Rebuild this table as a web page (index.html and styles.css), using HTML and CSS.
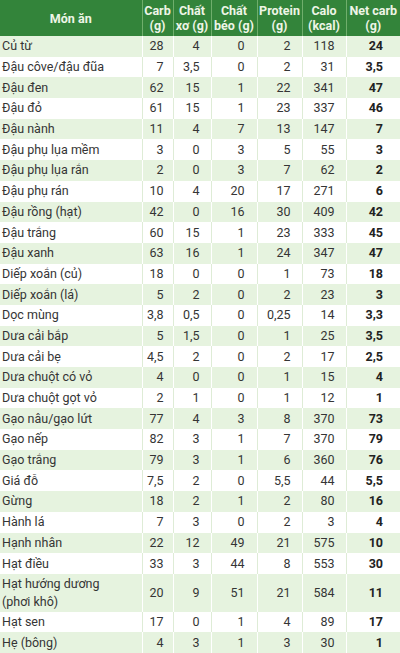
FILE: index.html
```html
<!DOCTYPE html>
<html lang="vi">
<head>
<meta charset="utf-8">
<title>Net carb</title>
<link rel="stylesheet" href="styles.css">
</head>
<body>
<table class="carb-table">
  <colgroup>
    <col class="c-name"><col class="c-carb"><col class="c-fiber"><col class="c-fat"><col class="c-prot"><col class="c-cal"><col class="c-net">
  </colgroup>
  <thead>
    <tr>
      <th>Món ăn</th>
      <th>Carb<br>(g)</th>
      <th>Chất<br>xơ (g)</th>
      <th>Chất<br>béo (g)</th>
      <th>Protein<br>(g)</th>
      <th>Calo<br>(kcal)</th>
      <th>Net carb<br>(g)</th>
    </tr>
  </thead>
  <tbody>
    <tr><td>Củ từ</td><td>28</td><td>4</td><td>0</td><td>2</td><td>118</td><td>24</td></tr>
    <tr><td>Đậu côve/đậu đũa</td><td>7</td><td>3,5</td><td>0</td><td>2</td><td>31</td><td>3,5</td></tr>
    <tr><td>Đậu đen</td><td>62</td><td>15</td><td>1</td><td>22</td><td>341</td><td>47</td></tr>
    <tr><td>Đậu đỏ</td><td>61</td><td>15</td><td>1</td><td>23</td><td>337</td><td>46</td></tr>
    <tr><td>Đậu nành</td><td>11</td><td>4</td><td>7</td><td>13</td><td>147</td><td>7</td></tr>
    <tr><td>Đậu phụ lụa mềm</td><td>3</td><td>0</td><td>3</td><td>5</td><td>55</td><td>3</td></tr>
    <tr><td>Đậu phụ lụa rắn</td><td>2</td><td>0</td><td>3</td><td>7</td><td>62</td><td>2</td></tr>
    <tr><td>Đậu phụ rán</td><td>10</td><td>4</td><td>20</td><td>17</td><td>271</td><td>6</td></tr>
    <tr><td>Đậu rồng (hạt)</td><td>42</td><td>0</td><td>16</td><td>30</td><td>409</td><td>42</td></tr>
    <tr><td>Đậu trắng</td><td>60</td><td>15</td><td>1</td><td>23</td><td>333</td><td>45</td></tr>
    <tr><td>Đậu xanh</td><td>63</td><td>16</td><td>1</td><td>24</td><td>347</td><td>47</td></tr>
    <tr><td>Diếp xoắn (củ)</td><td>18</td><td>0</td><td>0</td><td>1</td><td>73</td><td>18</td></tr>
    <tr><td>Diếp xoắn (lá)</td><td>5</td><td>2</td><td>0</td><td>2</td><td>23</td><td>3</td></tr>
    <tr><td>Dọc mùng</td><td>3,8</td><td>0,5</td><td>0</td><td>0,25</td><td>14</td><td>3,3</td></tr>
    <tr><td>Dưa cải bắp</td><td>5</td><td>1,5</td><td>0</td><td>1</td><td>25</td><td>3,5</td></tr>
    <tr><td>Dưa cải bẹ</td><td>4,5</td><td>2</td><td>0</td><td>2</td><td>17</td><td>2,5</td></tr>
    <tr><td>Dưa chuột có vỏ</td><td>4</td><td>0</td><td>0</td><td>1</td><td>15</td><td>4</td></tr>
    <tr><td>Dưa chuột gọt vỏ</td><td>2</td><td>1</td><td>0</td><td>1</td><td>12</td><td>1</td></tr>
    <tr><td>Gạo nâu/gạo lứt</td><td>77</td><td>4</td><td>3</td><td>8</td><td>370</td><td>73</td></tr>
    <tr><td>Gạo nếp</td><td>82</td><td>3</td><td>1</td><td>7</td><td>370</td><td>79</td></tr>
    <tr><td>Gạo trắng</td><td>79</td><td>3</td><td>1</td><td>6</td><td>360</td><td>76</td></tr>
    <tr><td>Giá đỗ</td><td>7,5</td><td>2</td><td>0</td><td>5,5</td><td>44</td><td>5,5</td></tr>
    <tr><td>Gừng</td><td>18</td><td>2</td><td>1</td><td>2</td><td>80</td><td>16</td></tr>
    <tr><td>Hành lá</td><td>7</td><td>3</td><td>0</td><td>2</td><td>3</td><td>4</td></tr>
    <tr><td>Hạnh nhân</td><td>22</td><td>12</td><td>49</td><td>21</td><td>575</td><td>10</td></tr>
    <tr><td>Hạt điều</td><td>33</td><td>3</td><td>44</td><td>8</td><td>553</td><td>30</td></tr>
    <tr class="tall"><td>Hạt hướng dương<br>(phơi khô)</td><td>20</td><td>9</td><td>51</td><td>21</td><td>584</td><td>11</td></tr>
    <tr><td>Hạt sen</td><td>17</td><td>0</td><td>1</td><td>4</td><td>89</td><td>17</td></tr>
    <tr><td>Hẹ (bông)</td><td>4</td><td>3</td><td>1</td><td>3</td><td>30</td><td>1</td></tr>
  </tbody>
</table>
</body>
</html>
```

FILE: styles.css
```css
html, body {
  margin: 0;
  padding: 0;
  background: #ffffff;
}

body {
  font-family: Roboto, "Noto Sans", "Liberation Sans", sans-serif;
  color: #353535;
  width: 400px;
  overflow: hidden;
}

.carb-table {
  width: 400px;
  border-collapse: collapse;
  table-layout: fixed;
}

.c-name { width: 142px; }
.c-carb { width: 31px; }
.c-fiber { width: 38px; }
.c-fat { width: 46px; }
.c-prot { width: 45px; }
.c-cal { width: 44px; }
.c-net { width: 54px; }

.carb-table th {
  background: #33843a;
  color: #eef5e6;
  font-weight: 700;
  font-size: 12.5px;
  line-height: 15px;
  height: 36px;
  padding: 0;
  text-align: center;
  vertical-align: middle;
  border-left: 1px solid #6fae6c;
  box-sizing: border-box;
  white-space: nowrap;
  overflow: hidden;
}

.carb-table th:first-child {
  border-left: none;
}

.carb-table td {
  font-size: 12.5px;
  line-height: 16px;
  height: 20.7px;
  padding: 0 11px 0 0;
  text-align: right;
  vertical-align: middle;
  border-left: 1px solid #deecd6;
  box-sizing: border-box;
  white-space: nowrap;
}

.carb-table td:first-child {
  text-align: left;
  padding: 0 0 0 2px;
  border-left: none;
}

.carb-table td:nth-child(2) {
  padding-right: 9px;
}

.carb-table td:nth-child(4) {
  padding-right: 12px;
}

.carb-table td:last-child {
  font-weight: 700;
  padding-right: 17px;
  color: #222222;
}

.carb-table tbody tr:nth-child(odd) td {
  background: #e6f3df;
  border-left-color: #ffffff;
}

.carb-table tbody tr:nth-child(odd) td:first-child {
  border-left: none;
}

.carb-table tr.tall td {
  height: 37.7px;
  line-height: 18px;
}
```
